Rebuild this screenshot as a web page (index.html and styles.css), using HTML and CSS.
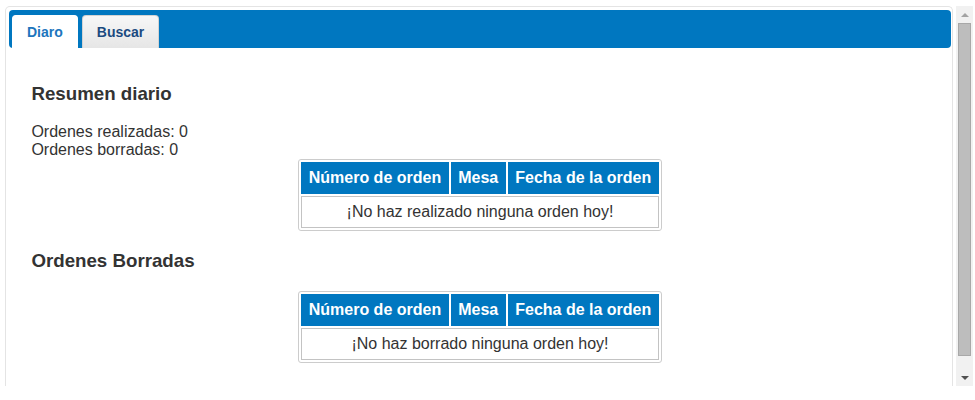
FILE: index.html
```html
<!DOCTYPE html>
<html lang="es">
<head>
<meta charset="utf-8">
<title>Resumen diario</title>
<link rel="stylesheet" href="styles.css">
</head>
<body>
<div class="viewport">
  <div class="frame">
    <ul class="tabs-nav">
      <li class="tab active"><a>Diaro</a></li>
      <li class="tab"><a>Buscar</a></li>
    </ul>
    <div class="panel">
      <h3>Resumen diario</h3>
      <div class="stats">
        <div>Ordenes realizadas: 0</div>
        <div>Ordenes borradas: 0</div>
      </div>
      <table class="orders">
        <thead>
          <tr><th>Número de orden</th><th>Mesa</th><th>Fecha de la orden</th></tr>
        </thead>
        <tbody>
          <tr><td colspan="3">¡No haz realizado ninguna orden hoy!</td></tr>
        </tbody>
      </table>
      <h3>Ordenes Borradas</h3>
      <table class="orders">
        <thead>
          <tr><th>Número de orden</th><th>Mesa</th><th>Fecha de la orden</th></tr>
        </thead>
        <tbody>
          <tr><td colspan="3">¡No haz borrado ninguna orden hoy!</td></tr>
        </tbody>
      </table>
    </div>
  </div>
  <div class="scrollbar">
    <div class="sb-btn"><span class="arrow-up"></span></div>
    <div class="sb-thumb"></div>
    <div class="sb-space"></div>
    <div class="sb-btn"><span class="arrow-down"></span></div>
  </div>
</div>
</body>
</html>
```

FILE: styles.css
```css
html, body {
  margin: 0;
  padding: 0;
  background: #ffffff;
}

body {
  font-family: "Liberation Sans", Arial, sans-serif;
  font-size: 16px;
  color: #333333;
}

.viewport {
  display: flex;
  width: 968px;
  height: 380px;
  margin: 6px 0 0 5px;
  overflow: hidden;
}

.frame {
  box-sizing: border-box;
  width: 948px;
  flex: none;
  border: 1px solid #e4e4e4;
  border-bottom: none;
  border-radius: 5px 5px 0 0;
  padding: 3px 1px 3px 3px;
  overflow: hidden;
}

.tabs-nav {
  list-style: none;
  margin: 0;
  padding: 5px 3px 0;
  height: 33px;
  background: #0077c0;
  border-radius: 4px;
  display: flex;
  align-items: flex-start;
  gap: 4px;
}

.tab {
  box-sizing: border-box;
  height: 33px;
  border: 1px solid #d3d3d3;
  border-bottom: none;
  border-radius: 4px 4px 0 0;
  background: linear-gradient(#f7f7f7, #e6e6e6);
}

.tab a {
  display: block;
  padding: 8px 14px;
  font-size: 14px;
  font-weight: bold;
  line-height: 16px;
  color: #1b4a80;
}

.tab.active {
  height: 34px;
  background: #ffffff;
  border-color: #ffffff;
}

.tab.active a {
  color: #1d75bd;
}

.panel {
  padding: 16px 22.4px;
}

.panel h3 {
  margin: 18.72px 0;
  font-size: 18.72px;
  font-weight: bold;
  color: #333333;
}

.stats {
  line-height: normal;
}

.orders {
  margin: 0 auto;
  border: 1px solid #cccccc;
  border-radius: 3px;
  border-spacing: 2px;
}

.orders th {
  background: #0077c0;
  color: #ffffff;
  font-weight: bold;
  border: 1px solid #0077c0;
  padding: 6px 6.5px;
  white-space: nowrap;
}

.orders td {
  border: 1px solid #c3c3c3;
  padding: 6px;
  text-align: center;
  color: #333333;
}

.scrollbar {
  width: 17px;
  margin-left: 3px;
  flex: none;
  display: flex;
  flex-direction: column;
  background: #f1f1f1;
}

.sb-btn {
  height: 17px;
  flex: none;
  display: flex;
  align-items: center;
  justify-content: center;
}

.arrow-up {
  width: 0;
  height: 0;
  border-left: 4px solid transparent;
  border-right: 4px solid transparent;
  border-bottom: 4px solid #a3a3a3;
}

.arrow-down {
  width: 0;
  height: 0;
  border-left: 4px solid transparent;
  border-right: 4px solid transparent;
  border-top: 4px solid #505050;
}

.sb-thumb {
  box-sizing: border-box;
  height: 333px;
  margin: 0 2px;
  flex: none;
  background: #bdbdbd;
  border: 1px solid #a8a8a8;
}

.sb-space {
  flex: 1;
}
```
